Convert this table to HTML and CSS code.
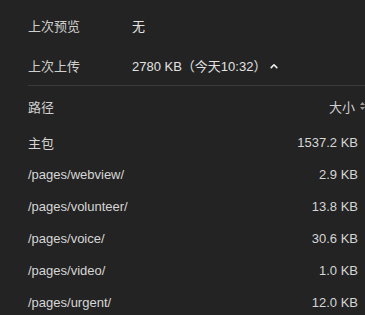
FILE: index.html
```html
<!DOCTYPE html>
<html lang="zh">
<head>
<meta charset="utf-8">
<link rel="stylesheet" href="styles.css">
</head>
<body>
<div class="panel">
  <div class="info">
    <div class="info-row">
      <span class="label">上次预览</span>
      <span class="value">无</span>
    </div>
    <div class="info-row">
      <span class="label">上次上传</span>
      <span class="value">2780 KB（今天10:32）<svg class="caret" width="8" height="6" viewBox="0 0 8 6"><path d="M1.2 4.6 L4 1.8 L6.8 4.6" fill="none" stroke="#f0f0f0" stroke-width="1.6" stroke-linecap="round" stroke-linejoin="round"/></svg></span>
    </div>
  </div>
  <div class="table">
    <div class="thead">
      <span>路径</span>
      <span class="th-size">大小<svg class="sort" width="10" height="12" viewBox="0 0 10 12"><path d="M7.5 2 L10 5 L5 5 Z" fill="#9a9a9a"/><path d="M7.5 10 L10 7 L5 7 Z" fill="#9a9a9a"/></svg></span>
    </div>
    <div class="trow"><span>主包</span><span>1537.2 KB</span></div>
    <div class="trow"><span>/pages/webview/</span><span>2.9 KB</span></div>
    <div class="trow"><span>/pages/volunteer/</span><span>13.8 KB</span></div>
    <div class="trow"><span>/pages/voice/</span><span>30.6 KB</span></div>
    <div class="trow"><span>/pages/video/</span><span>1.0 KB</span></div>
    <div class="trow"><span>/pages/urgent/</span><span>12.0 KB</span></div>
  </div>
</div>
</body>
</html>
```
FILE: styles.css
```css
html, body {
  margin: 0;
  padding: 0;
  background: #232323;
  overflow: hidden;
}
body {
  font-family: "Liberation Sans", "Noto Sans CJK SC", sans-serif;
  font-size: 13px;
  color: #d6d6d6;
  width: 365px;
  height: 315px;
}
.panel {
  padding-top: 5px;
}
.info {
  margin-left: 28px;
  border-bottom: 1px solid #3a3a3a;
}
.info-row {
  display: flex;
  align-items: center;
  height: 40px;
}
.label {
  width: 104px;
  color: #cfcfcf;
}
.value {
  display: flex;
  align-items: center;
  color: #e2e2e2;
}
.caret {
  margin-left: 4px;
  margin-top: 1px;
}
.table {
  padding-left: 28px;
}
.thead {
  display: flex;
  justify-content: space-between;
  align-items: center;
  height: 40px;
  color: #d0d0d0;
}
.th-size {
  display: flex;
  align-items: center;
}
.sort {
  display: block;
}
.trow {
  display: flex;
  justify-content: space-between;
  align-items: center;
  height: 32px;
  padding-right: 7px;
  color: #d6d6d6;
}
```
